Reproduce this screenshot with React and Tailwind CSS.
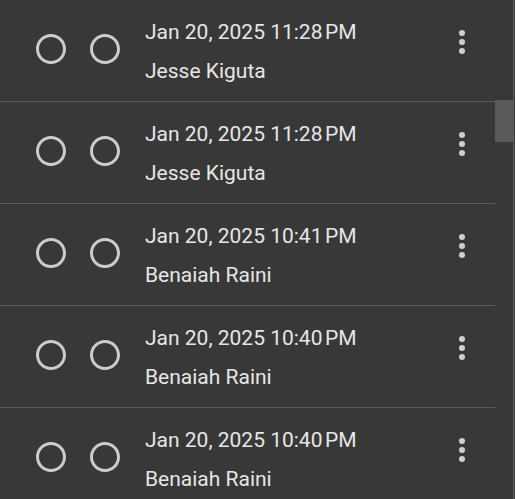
import { useState } from "react";

const entries = [
    { date: "Jan 20, 2025 11:28\u202FPM", name: "Jesse Kiguta" },
    { date: "Jan 20, 2025 11:28\u202FPM", name: "Jesse Kiguta" },
    { date: "Jan 20, 2025 10:41\u202FPM", name: "Benaiah Raini" },
    { date: "Jan 20, 2025 10:40\u202FPM", name: "Benaiah Raini" },
    { date: "Jan 20, 2025 10:40\u202FPM", name: "Benaiah Raini" },
];

const RadioIcon = () => (
    <svg className="h-9 w-9" viewBox="0 0 24 24" fill="#cccccc">
        <path d="M12 2C6.48 2 2 6.48 2 12s4.48 10 10 10 10-4.48 10-10S17.52 2 12 2zm0 18c-4.42 0-8-3.58-8-8s3.58-8 8-8 8 3.58 8 8-3.58 8-8 8z" />
    </svg>
);

const MoreIcon = () => (
    <svg className="h-9 w-9" viewBox="0 0 24 24" fill="#cfcfcf">
        <circle cx="12" cy="6" r="2" />
        <circle cx="12" cy="12" r="2" />
        <circle cx="12" cy="18" r="2" />
    </svg>
);

const Row = ({ entry }) => {
    const [selected, setSelected] = useState(false);

    return (
        <div className="flex h-[102px] shrink-0 items-start border-b border-[#5c5c5c]">
            <div className="mt-[31px] flex gap-[18px] pl-[33px]">
                <button onClick={() => setSelected(!selected)}>
                    <RadioIcon />
                </button>
                <button>
                    <RadioIcon />
                </button>
            </div>
            <div className="ml-[22px] mt-[17px] flex flex-1 flex-col">
                <span className="text-[21px] leading-[30px] text-[#e6e6e6]">{entry.date}</span>
                <span className="mt-[9px] text-[21px] leading-[30px] text-[#e6e6e6]">{entry.name}</span>
            </div>
            <button className="mr-[15px] mt-[24px]">
                <MoreIcon />
            </button>
        </div>
    );
};

const App = () => {
    return (
        <div
            className="flex h-[499px] w-[515px] overflow-hidden bg-[#383838]"
            style={{ fontFamily: "Roboto, 'Liberation Sans', sans-serif" }}
        >
            <div className="flex w-[495px] flex-col">
                {entries.map((entry, i) => (
                    <Row key={i} entry={entry} />
                ))}
            </div>
            <div className="flex w-[20px]">
                <div className="w-[18px]">
                    <div className="mt-[100px] h-[42px] w-[18px] bg-[#5a5a5a]" />
                </div>
                <div className="w-px bg-[#5e5e5e]" />
                <div className="w-px" />
            </div>
        </div>
    );
};

export default App;
